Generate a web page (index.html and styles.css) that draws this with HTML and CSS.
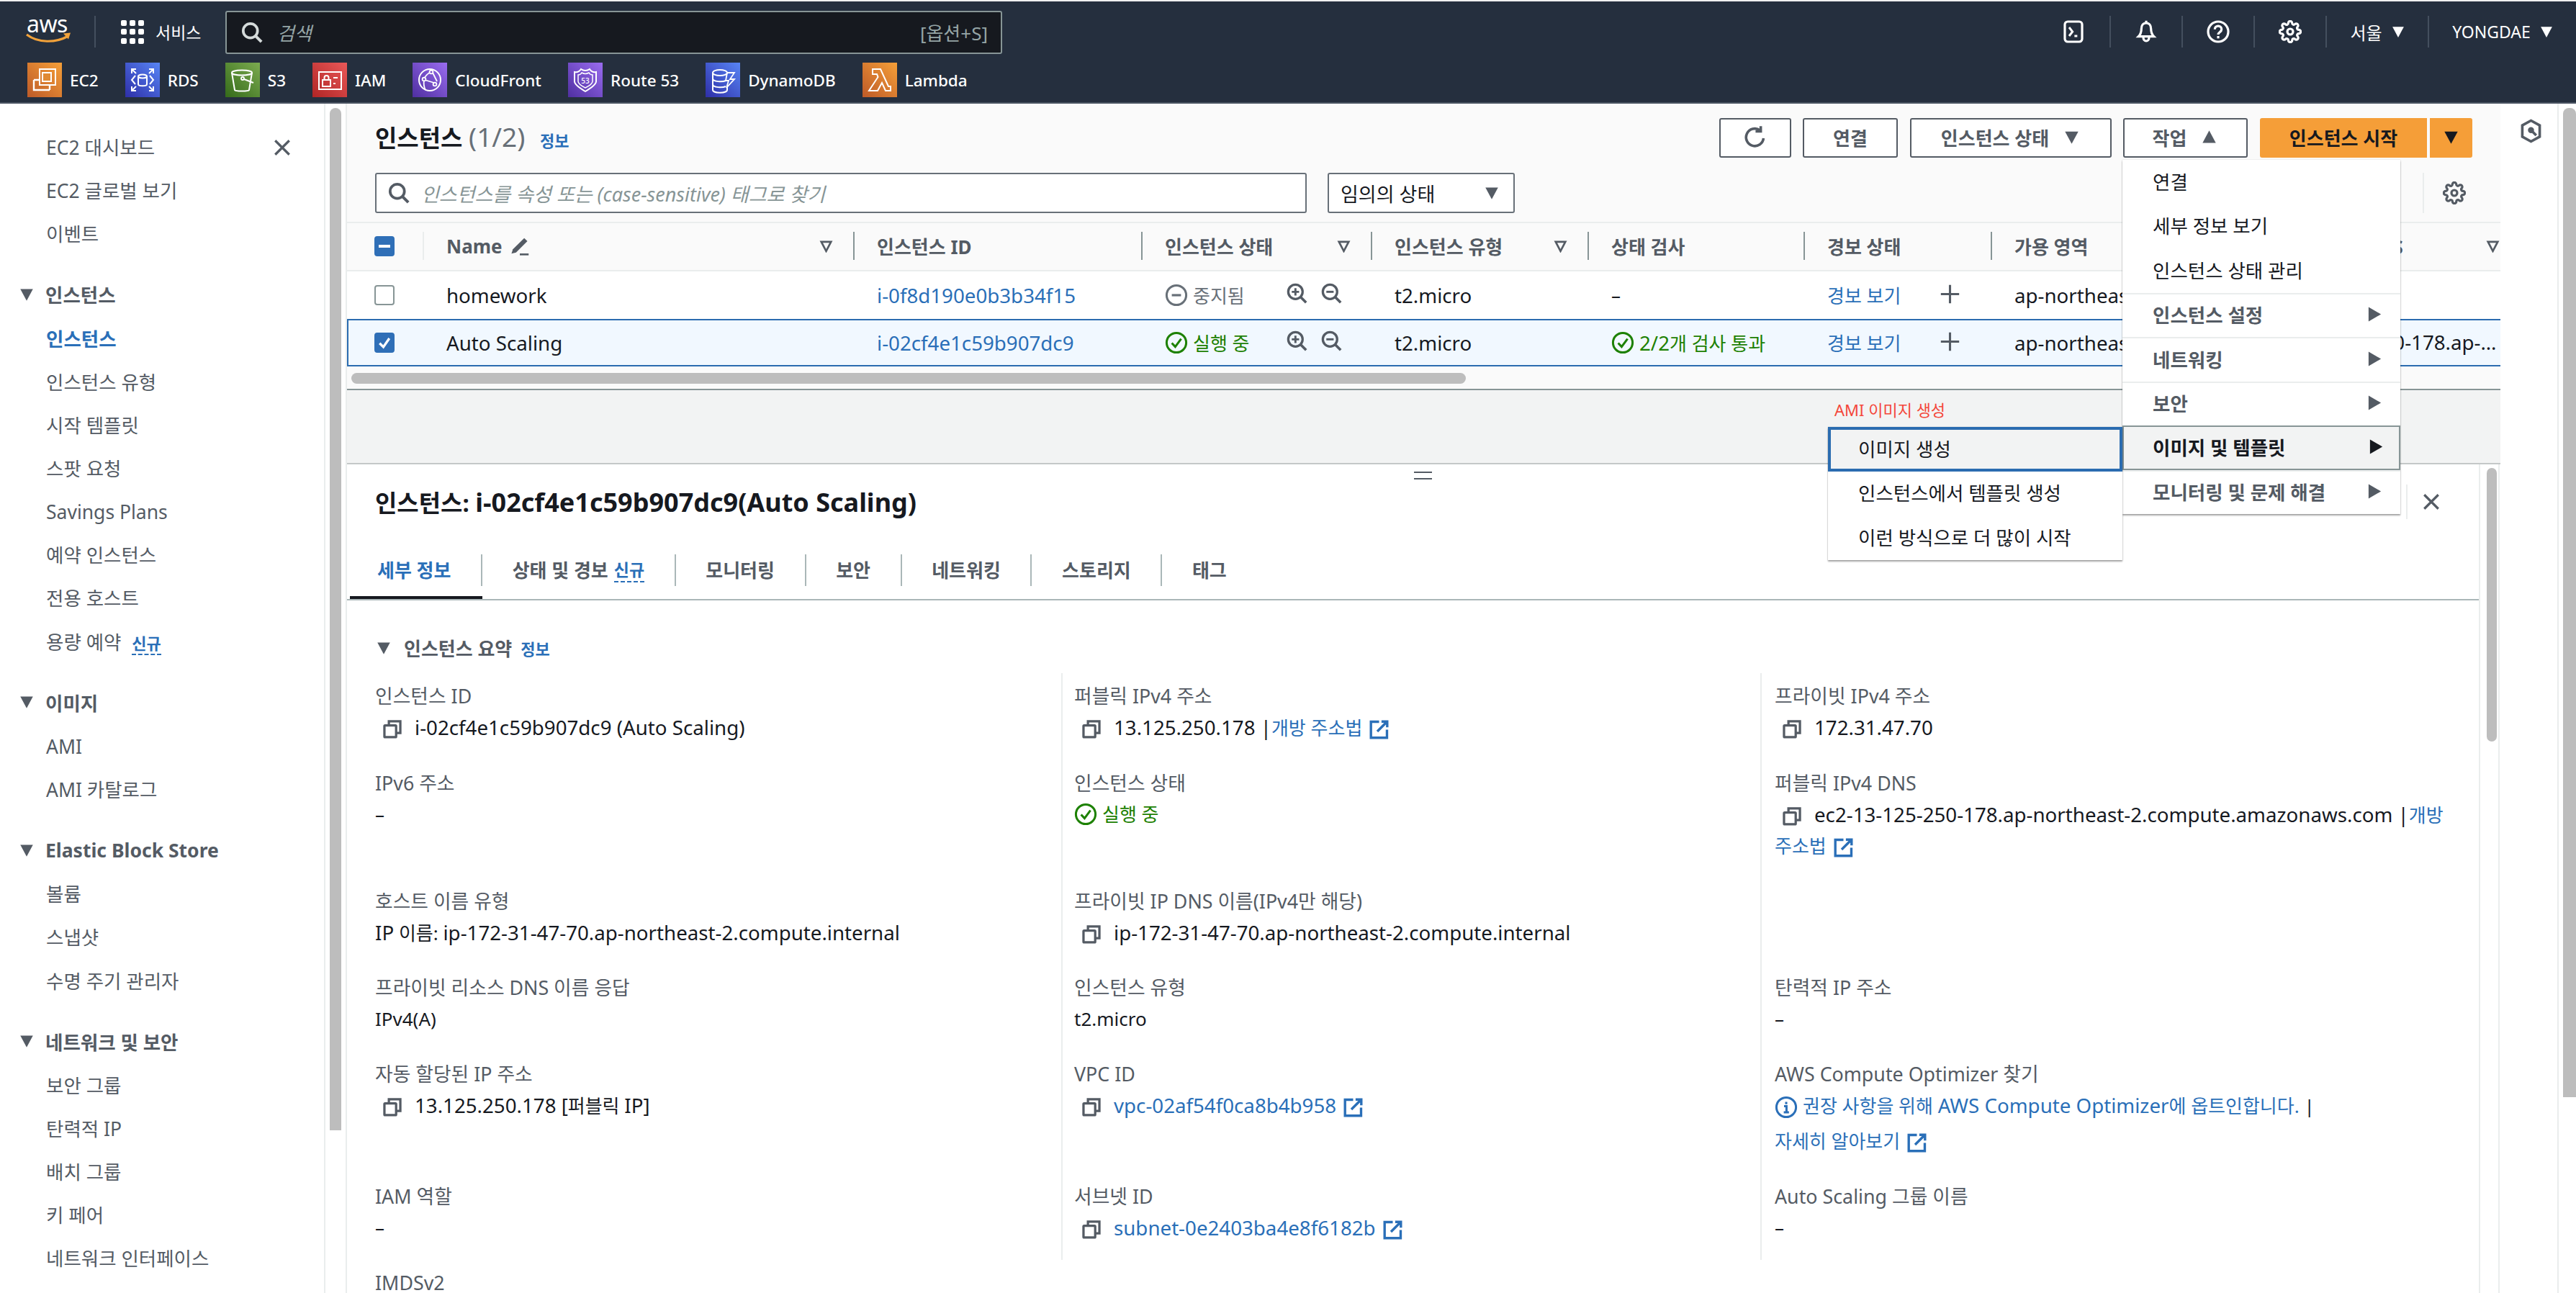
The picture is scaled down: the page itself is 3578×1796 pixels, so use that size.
FILE: index.html
```html
<!doctype html>
<html lang="ko">
<head>
    <meta charset="UTF-8">
    <title>인스턴스 | EC2</title>
    <link rel="stylesheet" href="styles.css">
</head>
<body>
<svg class="defs" xmlns="http://www.w3.org/2000/svg">
    <symbol id="i-search" viewBox="0 0 16 16"><circle cx="6.8" cy="6.8" r="5.3" fill="none" stroke="currentColor" stroke-width="2"/><path d="M10.6 10.6 15 15" stroke="currentColor" stroke-width="2.2" fill="none"/></symbol>
    <symbol id="i-gear" viewBox="0 0 24 24"><circle cx="12" cy="12" r="3" fill="none" stroke="currentColor" stroke-width="2.4"/><path fill="none" stroke="currentColor" stroke-width="2.4" d="M19.4 15a1.65 1.65 0 0 0 .33 1.82l.06.06a2 2 0 0 1 0 2.83 2 2 0 0 1-2.83 0l-.06-.06a1.65 1.65 0 0 0-1.82-.33 1.65 1.65 0 0 0-1 1.51V21a2 2 0 0 1-2 2 2 2 0 0 1-2-2v-.09A1.65 1.65 0 0 0 9 19.4a1.65 1.65 0 0 0-1.82.33l-.06.06a2 2 0 0 1-2.83 0 2 2 0 0 1 0-2.83l.06-.06a1.65 1.65 0 0 0 .33-1.82 1.65 1.65 0 0 0-1.51-1H3a2 2 0 0 1-2-2 2 2 0 0 1 2-2h.09A1.65 1.65 0 0 0 4.6 9a1.65 1.65 0 0 0-.33-1.82l-.06-.06a2 2 0 0 1 0-2.83 2 2 0 0 1 2.83 0l.06.06a1.65 1.65 0 0 0 1.82.33H9a1.65 1.65 0 0 0 1-1.51V3a2 2 0 0 1 2-2 2 2 0 0 1 2 2v.09a1.65 1.65 0 0 0 1 1.51 1.65 1.65 0 0 0 1.82-.33l.06-.06a2 2 0 0 1 2.83 0 2 2 0 0 1 0 2.83l-.06.06a1.65 1.65 0 0 0-.33 1.82V9a1.65 1.65 0 0 0 1.51 1H21a2 2 0 0 1 2 2 2 2 0 0 1-2 2h-.09a1.65 1.65 0 0 0-1.51 1z"/></symbol>
    <symbol id="i-down" viewBox="0 0 16 16"><path d="M1 2h14L8 15z" fill="currentColor"/></symbol>
    <symbol id="i-up" viewBox="0 0 16 16"><path d="M1 14h14L8 1z" fill="currentColor"/></symbol>
    <symbol id="i-right" viewBox="0 0 16 16"><path d="M2 1v14l12-7z" fill="currentColor"/></symbol>
    <symbol id="i-sort" viewBox="0 0 16 16"><path d="M2 2.5h12L8 14z" fill="none" stroke="currentColor" stroke-width="2.4"/></symbol>
    <symbol id="i-refresh" viewBox="0 0 16 16"><path d="M13.4 8.5A5.7 5.7 0 1 1 11 3.2" fill="none" stroke="currentColor" stroke-width="1.7"/><path d="M11.6 .6v3.4H8.2" fill="none" stroke="currentColor" stroke-width="1.7"/></symbol>
    <symbol id="i-pencil" viewBox="0 0 16 16"><path d="M11.5 1.5 14 4 5 13l-3.6.8L2.5 10.4z" fill="currentColor"/><path d="M8 14.5h7" stroke="currentColor" stroke-width="1.5"/></symbol>
    <symbol id="i-zoomin" viewBox="0 0 16 16"><circle cx="6.8" cy="6.8" r="5.5" fill="none" stroke="currentColor" stroke-width="1.8"/><path d="M11 11l4 4" stroke="currentColor" stroke-width="2"/><path d="M4 6.8h5.6M6.8 4v5.6" stroke="currentColor" stroke-width="1.6"/></symbol>
    <symbol id="i-zoomout" viewBox="0 0 16 16"><circle cx="6.8" cy="6.8" r="5.5" fill="none" stroke="currentColor" stroke-width="1.8"/><path d="M11 11l4 4" stroke="currentColor" stroke-width="2"/><path d="M4 6.8h5.6" stroke="currentColor" stroke-width="1.6"/></symbol>
    <symbol id="i-ok" viewBox="0 0 16 16"><circle cx="8" cy="8" r="6.8" fill="none" stroke="currentColor" stroke-width="1.5"/><path d="M4.8 8.2 7.2 10.8 11.3 5.3" fill="none" stroke="currentColor" stroke-width="1.5"/></symbol>
    <symbol id="i-stopped" viewBox="0 0 16 16"><circle cx="8" cy="8" r="6.8" fill="none" stroke="currentColor" stroke-width="1.5"/><path d="M4.8 8h6.4" stroke="currentColor" stroke-width="1.6"/></symbol>
    <symbol id="i-info" viewBox="0 0 16 16"><circle cx="8" cy="8" r="6.8" fill="none" stroke="currentColor" stroke-width="1.5"/><path d="M6.5 7.3H8.2V11.5M6.3 11.5h3.6M8 4.2v1.700" fill="none" stroke="currentColor" stroke-width="1.5"/></symbol>
    <symbol id="i-plus" viewBox="0 0 16 16"><path d="M8 1v14M1 8h14" stroke="currentColor" stroke-width="1.7"/></symbol>
    <symbol id="i-close" viewBox="0 0 16 16"><path d="M2 2l12 12M14 2 2 14" stroke="currentColor" stroke-width="2"/></symbol>
    <symbol id="i-copy" viewBox="0 0 16 16"><rect x="1.2" y="4.7" width="10" height="10" fill="#fff" stroke="currentColor" stroke-width="2" rx=".6"/><path d="M5 4.7V1.200h9.800v10h-3.500" fill="none" stroke="currentColor" stroke-width="2"/></symbol>
    <symbol id="i-ext" viewBox="0 0 16 16"><path d="M8 1.500H1.300v13.200h13.200V8" fill="none" stroke="currentColor" stroke-width="2"/><path d="M10 1.300h4.700V6M14.500 1.500 6.500 9.500" fill="none" stroke="currentColor" stroke-width="2"/></symbol>
</svg>

<header class="topnav">
    <div class="nav-main">
        <div class="logo">
            <svg class="logo-svg" width="64" height="44" viewBox="0 0 64 44">
                <text x="1" y="23" class="logo-text">aws</text>
                <path d="M1 26c16 12 40 12 58 2" fill="none" stroke="#f2a23a" stroke-width="3.2"/>
                <path d="M52 24.500l10-1-3 9" fill="#f2a23a"/>
            </svg>
        </div>
        <a class="services">
            <span class="dots"><i></i><i></i><i></i><i></i><i></i><i></i><i></i><i></i><i></i></span>
            <span>서비스</span>
        </a>
        <div class="global-search">
            <svg class="search-ic"><use href="#i-search"/></svg>
            <em>검색</em>
            <span class="shortcut">[옵션+S]</span>
        </div>
        <div class="nav-right">
            <a class="nav-btn">
                <svg class="ic-nav" viewBox="0 0 24 24"><rect x="3" y="1.500" width="18" height="21" rx="3" fill="none" stroke="currentColor" stroke-width="2.4"/><path d="M7.500 7.500 11 12l-3.500 4.500M13 16.500h3" fill="none" stroke="currentColor" stroke-width="2.2"/></svg>
            </a>
            <a class="nav-btn">
                <svg class="ic-nav" viewBox="0 0 24 24"><path d="M12 3c-3.500 0-5 3-5 6 0 3.500-1 6-3 8h16c-2-2-3-4.500-3-8 0-3-1.500-6-5-6z" fill="none" stroke="currentColor" stroke-width="2.4"/><path d="M12 .5v3M9 18c0 5 6 5 6 0" fill="none" stroke="currentColor" stroke-width="2.4"/></svg>
            </a>
            <a class="nav-btn">
                <svg class="ic-nav" viewBox="0 0 24 24"><circle cx="12" cy="12" r="10.500" fill="none" stroke="currentColor" stroke-width="2.4"/><path d="M8.500 9.500c0-4.500 7-4.500 7 0 0 3-3.500 3-3.500 5.500" fill="none" stroke="currentColor" stroke-width="2.4"/><path d="M12 16.500v2.500" stroke="currentColor" stroke-width="2.4"/></svg>
            </a>
            <a class="nav-btn">
                <svg class="ic-nav"><use href="#i-gear"/></svg>
            </a>
            <a class="nav-btn nav-region">서울<svg class="ic-caret"><use href="#i-down"/></svg></a>
            <a class="nav-btn nav-user">YONGDAE<svg class="ic-caret"><use href="#i-down"/></svg></a>
        </div>
    </div>
    <div class="nav-fav">
        <a class="fav"><span class="fav-ic orange">
            <svg viewBox="0 0 48 48"><rect x="17" y="9" width="22" height="22" fill="none" stroke="#fff" stroke-width="2"/><path d="M9 24v14h22" fill="none" stroke="#fff" stroke-width="2.4"/><path d="M9 24h8M31 31v7" fill="none" stroke="#fff" stroke-width="2.4"/><rect x="21" y="14" width="12" height="12" fill="#e08a35" stroke="#fff" stroke-width="2"/></svg>
        </span>EC2</a>
        <a class="fav"><span class="fav-ic blue">
            <svg viewBox="0 0 48 48"><ellipse cx="24" cy="19" rx="6" ry="2.500" fill="none" stroke="#fff" stroke-width="2"/><path d="M18 19v11c0 3 12 3 12 0V19" fill="none" stroke="#fff" stroke-width="2"/><path d="M14 18l-5 6 5 6M34 18l5 6-5 6" fill="none" stroke="#fff" stroke-width="2"/><path d="M9 15V9h6M9 9l6 6M39 15V9h-6M39 9l-6 6M9 33v6h6M9 39l6-6M39 33v6h-6M39 39l-6-6" fill="none" stroke="#fff" stroke-width="2"/></svg>
        </span>RDS</a>
        <a class="fav"><span class="fav-ic green">
            <svg viewBox="0 0 48 48"><ellipse cx="23" cy="14" rx="14" ry="3.500" fill="none" stroke="#fff" stroke-width="2"/><path d="M9 14l4 24c1 2 19 2 20 0l4-24" fill="none" stroke="#fff" stroke-width="2"/><circle cx="24" cy="22" r="2" fill="none" stroke="#fff" stroke-width="1.8"/><path d="M26 23l13 5" stroke="#fff" stroke-width="2"/></svg>
        </span>S3</a>
        <a class="fav"><span class="fav-ic red">
            <svg viewBox="0 0 48 48"><rect x="9" y="13" width="31" height="24" fill="none" stroke="#fff" stroke-width="2"/><rect x="14" y="24" width="11" height="9" fill="none" stroke="#fff" stroke-width="2"/><path d="M16.500 24v-3c0-4 6-4 6 0v3M29 21h6M29 29h3" fill="none" stroke="#fff" stroke-width="2"/></svg>
        </span>IAM</a>
        <a class="fav"><span class="fav-ic purple">
            <svg viewBox="0 0 48 48"><circle cx="24" cy="24" r="15" fill="none" stroke="#fff" stroke-width="2"/><path d="M16 22c3-5 7-8 10-9M28 14l6 12M17 24l13 4M16 25c-1 5 0 9 2 13" fill="none" stroke="#fff" stroke-width="1.8"/><circle cx="26" cy="13" r="2.400" fill="#7a4fc9" stroke="#fff" stroke-width="1.8"/><circle cx="16" cy="23" r="2.400" fill="#7a4fc9" stroke="#fff" stroke-width="1.8"/><circle cx="31" cy="30" r="2.400" fill="#7a4fc9" stroke="#fff" stroke-width="1.8"/></svg>
        </span>CloudFront</a>
        <a class="fav"><span class="fav-ic purple">
            <svg viewBox="0 0 48 48"><path d="M9 13c4 1 7-1 9-4 2 1.500 4 2 6 2s4-.5 6-2c2 3 5 5 9 4v13c0 5-10 11-15 14C19 37 9 31 9 26z" fill="none" stroke="#fff" stroke-width="2"/><path d="M14 17c2 0 4-1 5-3 2 1 3 1.500 5 1.500s3-.5 5-1.500c1 2 3 3 5 3v9c0 3-6 7-10 9-4-2-10-6-10-9z" fill="none" stroke="#fff" stroke-width="1.5"/><text x="24" y="29" class="fav-53">53</text></svg>
        </span>Route 53</a>
        <a class="fav"><span class="fav-ic blue">
            <svg viewBox="0 0 48 48"><ellipse cx="20" cy="14" rx="10" ry="4" fill="none" stroke="#fff" stroke-width="2"/><path d="M10 14v24c0 5 20 5 20 0v-5M10 22c0 5 14 5 18 3M10 30c0 5 14 5 18 3" fill="none" stroke="#fff" stroke-width="2"/><path d="M30 14h10l-6 9h6l-11 12 3-10h-4z" fill="none" stroke="#fff" stroke-width="1.8"/></svg>
        </span>DynamoDB</a>
        <a class="fav"><span class="fav-ic orange">
            <svg viewBox="0 0 48 48"><path d="M14 9v7h6l1.500 4L9 39h12l6-11 5 11h7v-6h-3L25 9z" fill="none" stroke="#fff" stroke-width="2"/></svg>
        </span>Lambda</a>
    </div>
</header>

<div class="page">
    <aside class="sidenav">
        <svg class="sidenav-close"><use href="#i-close"/></svg>
        <a class="side-link">EC2 대시보드</a>
        <a class="side-link">EC2 글로벌 보기</a>
        <a class="side-link">이벤트</a>
        <div class="side-title"><svg class="ic-side"><use href="#i-down"/></svg>인스턴스</div>
        <a class="side-link active">인스턴스</a>
        <a class="side-link">인스턴스 유형</a>
        <a class="side-link">시작 템플릿</a>
        <a class="side-link">스팟 요청</a>
        <a class="side-link">Savings Plans</a>
        <a class="side-link">예약 인스턴스</a>
        <a class="side-link">전용 호스트</a>
        <a class="side-link">용량 예약 <span class="new">신규</span></a>
        <div class="side-title"><svg class="ic-side"><use href="#i-down"/></svg>이미지</div>
        <a class="side-link">AMI</a>
        <a class="side-link">AMI 카탈로그</a>
        <div class="side-title"><svg class="ic-side"><use href="#i-down"/></svg>Elastic Block Store</div>
        <a class="side-link">볼륨</a>
        <a class="side-link">스냅샷</a>
        <a class="side-link">수명 주기 관리자</a>
        <div class="side-title"><svg class="ic-side"><use href="#i-down"/></svg>네트워크 및 보안</div>
        <a class="side-link">보안 그룹</a>
        <a class="side-link">탄력적 IP</a>
        <a class="side-link">배치 그룹</a>
        <a class="side-link">키 페어</a>
        <a class="side-link">네트워크 인터페이스</a>
    </aside>
    <div class="side-scroll"><div class="side-thumb"></div></div>

    <main class="content">
        <section class="list-panel">
            <div class="list-head">
                <h2 class="list-title">인스턴스 <span class="count">(1/2)</span> <a class="info">정보</a></h2>
                <div class="actions">
                    <button class="btn btn-icon"><svg class="ic-refresh"><use href="#i-refresh"/></svg></button>
                    <button class="btn btn-connect">연결</button>
                    <button class="btn btn-state">인스턴스 상태<svg class="ic-btn"><use href="#i-down"/></svg></button>
                    <button class="btn btn-actions">작업<svg class="ic-btn"><use href="#i-up"/></svg></button>
                    <button class="btn-primary btn-launch">인스턴스 시작</button>
                    <button class="btn-primary btn-launch-more"><svg class="ic-btn"><use href="#i-down"/></svg></button>
                </div>
            </div>
            <div class="filter-row">
                <div class="filter-input">
                    <svg class="ic-filter"><use href="#i-search"/></svg>
                    <em>인스턴스를 속성 또는 (case-sensitive) 태그로 찾기</em>
                </div>
                <div class="filter-select">임의의 상태<svg class="ic-select"><use href="#i-down"/></svg></div>
                <div class="filter-tools"><svg class="ic-tool"><use href="#i-gear"/></svg></div>
            </div>

            <div class="t-row t-head">
                <div class="cell cell-check"><span class="cb cb-mixed"></span></div>
                <div class="cell sep">Name <svg class="ic-pencil"><use href="#i-pencil"/></svg><svg class="ic-sort"><use href="#i-sort"/></svg></div>
                <div class="cell sep">인스턴스 ID</div>
                <div class="cell sep">인스턴스 상태<svg class="ic-sort"><use href="#i-sort"/></svg></div>
                <div class="cell sep">인스턴스 유형<svg class="ic-sort"><use href="#i-sort"/></svg></div>
                <div class="cell sep">상태 검사</div>
                <div class="cell sep">경보 상태</div>
                <div class="cell sep">가용 영역</div>
                <div class="cell sep cell-last">퍼블릭 IPv4 DNS<svg class="ic-sort"><use href="#i-sort"/></svg></div>
            </div>
            <div class="t-row">
                <div class="cell cell-check"><span class="cb"></span></div>
                <div class="cell en">homework</div>
                <div class="cell en"><a class="link">i-0f8d190e0b3b34f15</a></div>
                <div class="cell">
                    <span class="status stopped"><svg class="ic-status"><use href="#i-stopped"/></svg>중지됨</span>
                    <span class="zooms"><svg class="ic-zoom"><use href="#i-zoomin"/></svg><svg class="ic-zoom"><use href="#i-zoomout"/></svg></span>
                </div>
                <div class="cell en">t2.micro</div>
                <div class="cell">–</div>
                <div class="cell"><a class="link">경보 보기</a><svg class="ic-plus"><use href="#i-plus"/></svg></div>
                <div class="cell en">ap-northeast-2a</div>
                <div class="cell">–</div>
            </div>
            <div class="t-row selected">
                <div class="cell cell-check"><span class="cb cb-on"><svg viewBox="0 0 16 16"><path d="M3.500 8.500 7 12l5.500-8" fill="none" stroke="#fff" stroke-width="2.2"/></svg></span></div>
                <div class="cell en">Auto Scaling</div>
                <div class="cell en"><a class="link">i-02cf4e1c59b907dc9</a></div>
                <div class="cell">
                    <span class="status running"><svg class="ic-status"><use href="#i-ok"/></svg>실행 중</span>
                    <span class="zooms"><svg class="ic-zoom"><use href="#i-zoomin"/></svg><svg class="ic-zoom"><use href="#i-zoomout"/></svg></span>
                </div>
                <div class="cell en">t2.micro</div>
                <div class="cell"><span class="status running"><svg class="ic-status"><use href="#i-ok"/></svg><span class="en">2/2</span>개&nbsp;검사&nbsp;통과</span></div>
                <div class="cell"><a class="link">경보 보기</a><svg class="ic-plus"><use href="#i-plus"/></svg></div>
                <div class="cell en">ap-northeast-2a</div>
                <div class="cell en cell-clip">ec2-13-125-250-178.ap-northeast-2.compute.amazonaws.com</div>
            </div>
            <div class="h-scroll"><div class="h-thumb"></div></div>
        </section>

        <div class="split-gap"></div>

        <section class="detail-panel">
            <div class="drag-handle"></div>
            <div class="detail-body">
                <div class="detail-head">
                    <h2>인스턴스: <span class="title-id">i-02cf4e1c59b907dc9(Auto Scaling)</span></h2>
                    <span class="detail-close"><svg><use href="#i-close"/></svg></span>
                </div>
                <nav class="tabs">
                    <a class="tab active"><span>세부 정보</span></a>
                    <a class="tab"><span>상태 및 경보 <b class="new">신규</b></span></a>
                    <a class="tab"><span>모니터링</span></a>
                    <a class="tab"><span>보안</span></a>
                    <a class="tab"><span>네트워킹</span></a>
                    <a class="tab"><span>스토리지</span></a>
                    <a class="tab"><span class="last">태그</span></a>
                </nav>
                <h3 class="summary-title"><svg class="ic-summary"><use href="#i-down"/></svg>인스턴스 요약 <a class="info">정보</a></h3>
                <div class="fields">
                    <div class="field"><label>인스턴스 ID</label><div class="val"><svg class="ic-copy"><use href="#i-copy"/></svg><span class="en">i-02cf4e1c59b907dc9 (Auto Scaling)</span></div></div>
                    <div class="field"><label>퍼블릭 IPv4 주소</label><div class="val"><svg class="ic-copy"><use href="#i-copy"/></svg><span class="en">13.125.250.178 |</span><a class="link">개방 주소법<svg class="ic-ext"><use href="#i-ext"/></svg></a></div></div>
                    <div class="field"><label>프라이빗 IPv4 주소</label><div class="val"><svg class="ic-copy"><use href="#i-copy"/></svg><span class="en">172.31.47.70</span></div></div>

                    <div class="field"><label>IPv6 주소</label><div class="val">–</div></div>
                    <div class="field"><label>인스턴스 상태</label><div class="val"><span class="status running"><svg class="ic-status"><use href="#i-ok"/></svg>실행 중</span></div></div>
                    <div class="field"><label>퍼블릭 IPv4 DNS</label><div class="val"><svg class="ic-copy"><use href="#i-copy"/></svg><span class="en">ec2-13-125-250-178.ap-northeast-2.compute.amazonaws.com |</span><a class="link">개방 주소법<svg class="ic-ext"><use href="#i-ext"/></svg></a></div></div>

                    <div class="field"><label>호스트 이름 유형</label><div class="val"><span class="en">IP</span> 이름: <span class="en">ip-172-31-47-70.ap-northeast-2.compute.internal</span></div></div>
                    <div class="field"><label>프라이빗 IP DNS 이름(IPv4만 해당)</label><div class="val"><svg class="ic-copy"><use href="#i-copy"/></svg><span class="en">ip-172-31-47-70.ap-northeast-2.compute.internal</span></div></div>
                    <div class="field"></div>

                    <div class="field"><label>프라이빗 리소스 DNS 이름 응답</label><div class="val en">IPv4(A)</div></div>
                    <div class="field"><label>인스턴스 유형</label><div class="val en">t2.micro</div></div>
                    <div class="field"><label>탄력적 IP 주소</label><div class="val">–</div></div>

                    <div class="field"><label>자동 할당된 IP 주소</label><div class="val"><svg class="ic-copy"><use href="#i-copy"/></svg><span class="en">13.125.250.178 [</span>퍼블릭 <span class="en">IP]</span></div></div>
                    <div class="field"><label>VPC ID</label><div class="val"><svg class="ic-copy"><use href="#i-copy"/></svg><a class="link"><span class="en">vpc-02af54f0ca8b4b958</span><svg class="ic-ext"><use href="#i-ext"/></svg></a></div></div>
                    <div class="field"><label>AWS Compute Optimizer 찾기</label>
                        <div class="val"><a class="link"><svg class="ic-status"><use href="#i-info"/></svg>권장 사항을 위해 <span class="en">AWS Compute Optimizer</span>에 옵트인합니다.</a> |</div>
                        <div class="val val-more"><a class="link">자세히 알아보기<svg class="ic-ext"><use href="#i-ext"/></svg></a></div>
                    </div>

                    <div class="field"><label>IAM 역할</label><div class="val">–</div></div>
                    <div class="field"><label>서브넷 ID</label><div class="val"><svg class="ic-copy"><use href="#i-copy"/></svg><a class="link"><span class="en">subnet-0e2403ba4e8f6182b</span><svg class="ic-ext"><use href="#i-ext"/></svg></a></div></div>
                    <div class="field"><label>Auto Scaling 그룹 이름</label><div class="val">–</div></div>

                    <div class="field"><label>IMDSv2</label></div>
                </div>
            </div>
            <div class="detail-scroll"><div class="detail-thumb"></div></div>
        </section>

        <!-- 작업 드롭다운 -->
        <ul class="menu">
            <li>연결</li>
            <li>세부 정보 보기</li>
            <li>인스턴스 상태 관리</li>
            <li class="group">인스턴스 설정<svg class="ic-arrow"><use href="#i-right"/></svg></li>
            <li class="group">네트워킹<svg class="ic-arrow"><use href="#i-right"/></svg></li>
            <li class="group">보안<svg class="ic-arrow"><use href="#i-right"/></svg></li>
            <li class="group hover">이미지 및 템플릿<svg class="ic-arrow"><use href="#i-right"/></svg></li>
            <li class="group">모니터링 및 문제 해결<svg class="ic-arrow"><use href="#i-right"/></svg></li>
        </ul>
        <span class="menu-tip">AMI 이미지 생성</span>
        <ul class="menu submenu">
            <li class="focus">이미지 생성</li>
            <li>인스턴스에서 템플릿 생성</li>
            <li>이런 방식으로 더 많이 시작</li>
        </ul>
    </main>

    <aside class="rail">
        <div class="rail-body">
            <svg viewBox="0 0 24 28" class="ic-rail"><path d="M12 2 22 7.500v13L12 26 2 20.500v-13z" fill="none" stroke="currentColor" stroke-width="3"/><circle cx="12" cy="13" r="3.500" fill="currentColor"/><path d="M13 14l5 5" stroke="currentColor" stroke-width="3"/></svg>
        </div>
        <div class="rail-scroll"><div class="rail-thumb"></div></div>
    </aside>
</div>
</body>
</html>
```
FILE: styles.css
```css
* {
    box-sizing: border-box;
}
html, body {
    margin: 0;
    padding: 0;
}
body {
    width: 3578px;
    height: 1796px;
    overflow: hidden;
    padding-top: 2px;
    background: #f0f0f0;
    font-family: "Noto Sans", "Noto Sans CJK KR", sans-serif;
    font-size: 26px;
    color: #16191f;
}
.defs {
    position: absolute;
    width: 0;
    height: 0;
}
h2, h3, ul {
    margin: 0;
    padding: 0;
}
em {
    font-style: italic;
}
/* latin runs sit a bit bigger than the hangul next to them */
.en {
    font-size: 27.7px;
}

/* top nav */
.topnav {
    height: 142px;
    background: #252f3e;
    border-bottom: 2px solid #4b5563;
    color: #fff;
}
.nav-main {
    display: flex;
    align-items: center;
    height: 84px;
}
.logo {
    width: 133px;
    height: 44px;
    padding-left: 36px;
    border-right: 2px solid #444f5e;
}
.logo-svg {
    overflow: visible;
}
.logo-text {
    font-family: "Noto Sans", sans-serif;
    font-size: 32px;
    fill: #fff;
    letter-spacing: -.5px;
}
.services {
    display: flex;
    align-items: center;
    gap: 16px;
    width: 180px;
    padding-left: 35px;
    font-size: 23px;
}
.dots {
    display: grid;
    grid-template-columns: repeat(3, 8px);
    grid-gap: 4.5px 4px;
}
.dots i {
    width: 8px;
    height: 8px;
    border-radius: 2px;
    background: #fff;
}
.global-search {
    display: flex;
    align-items: center;
    width: 1079px;
    height: 60px;
    margin-top: 2px;
    background: #16191f;
    border: 2px solid #879596;
    border-radius: 3px;
    padding: 0 18px 0 20px;
    color: #95a5a6;
    font-size: 26px;
}
.search-ic {
    width: 30px;
    height: 30px;
    color: #d5dbdb;
    margin-right: 20px;
}
.shortcut {
    margin-left: auto;
    font-size: 26px;
}
.nav-right {
    display: flex;
    margin-left: auto;
    align-items: center;
}
.nav-btn {
    display: flex;
    align-items: center;
    justify-content: center;
    width: 100px;
    height: 44px;
    border-left: 2px solid #444f5e;
    font-size: 24px;
}
.nav-btn:first-child {
    border-left: 0;
}
.ic-nav {
    width: 32px;
    height: 32px;
    color: #fff;
}
.ic-caret {
    width: 18px;
    height: 18px;
    margin-left: 13px;
    color: #fff;
}
.nav-region {
    width: 142px;
}
.nav-user {
    width: 206px;
    font-size: 23px;
}
.nav-fav {
    display: flex;
    align-items: center;
    height: 56px;
    padding: 0 0 6px 38px;
    font-size: 22.5px;
    font-weight: 500;
}
.fav {
    display: flex;
    align-items: center;
    gap: 11px;
    margin-right: 37px;
}
.fav-ic {
    width: 48px;
    height: 48px;
    display: block;
}
.fav-ic svg {
    display: block;
    width: 48px;
    height: 48px;
}
.fav-53 {
    font-size: 10px;
    fill: #fff;
    text-anchor: middle;
}
.orange { background: linear-gradient(45deg, #bd5a28, #f59f38); }
.blue { background: linear-gradient(45deg, #2e2fa8, #5885f5); }
.green { background: linear-gradient(45deg, #356b1a, #7cab50); }
.red { background: linear-gradient(45deg, #b02525, #ea5858); }
.purple { background: linear-gradient(45deg, #4f2fa0, #9a6cf0); }

/* page columns */
.page {
    display: flex;
    height: 1652px;
    background: #fff;
}
.sidenav {
    position: relative;
    width: 452px;
    padding-top: 31px;
    border-right: 2px solid #eaeded;
    background: #fff;
    color: #545b64;
    font-size: 26.5px;
    overflow: hidden;
}
.sidenav-close {
    position: absolute;
    left: 379px;
    top: 48px;
    width: 26px;
    height: 26px;
}
.side-link {
    display: block;
    height: 60.15px;
    line-height: 60px;
    padding-left: 64px;
    white-space: nowrap;
}
.side-link.active {
    color: #2a6fb8;
    font-weight: 700;
}
.side-title {
    display: flex;
    align-items: center;
    height: 60.15px;
    margin-top: 25px;
    padding: 0 0 3px 26px;
    font-weight: 700;
}
.ic-side {
    width: 22px;
    height: 20px;
    margin-right: 15px;
}
.new {
    margin-left: 8px;
    color: #2a6fb8;
    font-size: 22px;
    font-weight: 700;
    border-bottom: 2px dashed #2a6fb8;
}
.side-scroll {
    width: 28px;
    padding: 6px 6px 0;
    background: #fff;
}
.side-thumb {
    width: 16px;
    height: 1420px;
    border-radius: 8px 8px 0 0;
    background: #bdbdbd;
}

.content {
    position: relative;
    width: 2993px;
    background: #f2f3f3;
    display: flex;
    flex-direction: column;
    border-left: 2px solid #eaeded;
}
.list-panel {
    height: 398px;
    background: #fafafa;
    border-bottom: 2px solid #879596;
}
.list-head {
    display: flex;
    align-items: center;
    justify-content: space-between;
    padding: 20px 39px 0 39px;
}
.list-title {
    margin-bottom: 4px;
    font-size: 33px;
    font-weight: 700;
    color: #16191f;
}
.count {
    font-size: 37px;
    font-weight: 400;
    color: #687078;
}
.info {
    margin-left: 6px;
    font-size: 22px;
    font-weight: 700;
    color: #2a6fb8;
}
.list-title .info {
    margin-left: 12px;
}
.actions {
    display: flex;
}
.btn, .btn-primary {
    display: flex;
    align-items: center;
    justify-content: center;
    height: 55px;
    padding: 0 0 2px;
    font-family: inherit;
    font-size: 26px;
    font-weight: 700;
    color: #545b64;
    background: #fff;
    border: 2px solid #545b64;
    border-radius: 3px;
}
.btn-icon {
    width: 100px;
    margin-right: 16px;
}
.btn-connect {
    width: 132px;
    margin-right: 17px;
}
.btn-state {
    width: 280px;
    margin-right: 16px;
}
.btn-actions {
    width: 173px;
    margin-right: 17px;
}
.btn-primary {
    background: #f59e38;
    border: 0;
    color: #16191f;
}
.btn-launch {
    width: 232px;
    border-radius: 3px 0 0 3px;
    margin-right: 4px;
}
.btn-launch-more {
    width: 59px;
    border-radius: 0 3px 3px 0;
}
.ic-refresh {
    width: 34px;
    height: 34px;
}
.ic-btn {
    width: 25px;
    height: 21px;
    margin-left: 19px;
}
.btn-launch-more .ic-btn {
    margin-left: 0;
}
.filter-row {
    display: flex;
    align-items: center;
    padding: 21px 0 0 39px;
    height: 77px;
}
.filter-input {
    display: flex;
    align-items: center;
    width: 1294px;
    height: 56px;
    padding-left: 16px;
    background: #fff;
    border: 2px solid #687078;
    border-radius: 3px;
    color: #879596;
    font-size: 27px;
}
.ic-filter {
    width: 30px;
    height: 30px;
    margin-right: 16px;
    color: #545b64;
}
.filter-select {
    display: flex;
    align-items: center;
    justify-content: space-between;
    width: 260px;
    height: 56px;
    margin-left: 29px;
    padding: 0 18px 0 16px;
    background: #fff;
    border: 2px solid #687078;
    border-radius: 3px;
    font-size: 27px;
}
.ic-select {
    width: 24px;
    height: 20px;
    color: #545b64;
}
.filter-tools {
    height: 56px;
    margin-left: 1261px;
    padding-left: 26px;
    border-left: 2px solid #eaeded;
    display: flex;
    align-items: center;
}
.ic-tool {
    width: 32px;
    height: 32px;
    color: #545b64;
}

/* instance table */
.t-row {
    display: grid;
    grid-template-columns: 105px 598px 400px 319px 301px 300px 260px 344px 363px;
    height: 66px;
    background: #fff;
    font-size: 26px;
}
.t-head {
    height: 69px;
    margin-top: 12px;
    padding-bottom: 2px;
    background: #fafafa;
    border-top: 2px solid #eaeded;
    border-bottom: 2px solid #eaeded;
    font-weight: 700;
    color: #545b64;
}
.selected {
    background: #f1f8ff;
    box-shadow: inset 0 2px #2b6cb0, inset 0 -2px #2b6cb0, inset 2px 0 #2b6cb0;
}
.cell {
    display: flex;
    align-items: center;
    position: relative;
    padding-left: 33px;
    white-space: nowrap;
    overflow: hidden;
}
.cell-check {
    padding-left: 38px;
}
.cell-clip {
    display: block;
    line-height: 64px;
    text-overflow: ellipsis;
}
.sep::before {
    content: "";
    position: absolute;
    left: 0;
    top: 12px;
    bottom: 12px;
    width: 2px;
    background: #879596;
}
.t-head .cell:nth-child(2)::before {
    background: #eaeded;
}
.cb {
    display: flex;
    width: 28px;
    height: 28px;
    border: 2px solid #879596;
    border-radius: 4px;
    background: #fff;
}
.cb-mixed, .cb-on {
    background: #2f6fb7;
    border-color: #2f6fb7;
}
.cb-mixed::after {
    content: "";
    width: 16px;
    height: 4px;
    margin: auto;
    background: #fff;
}
.cb-on svg {
    width: 24px;
    height: 24px;
}
.ic-pencil {
    width: 28px;
    height: 28px;
    margin-left: 10px;
}
.ic-sort {
    position: absolute;
    right: 28px;
    width: 19px;
    height: 18px;
    color: #545b64;
}
.cell-last .ic-sort {
    right: 0;
}
.link {
    color: #2a6fb8;
}
.status {
    display: inline-flex;
    align-items: center;
    white-space: nowrap;
}
.ic-status {
    width: 32px;
    height: 32px;
    margin-right: 7px;
    flex: none;
    vertical-align: -8px;
}
.stopped {
    color: #687078;
}
.running {
    color: #1d8102;
}
.zooms {
    position: absolute;
    left: 202px;
    top: 16px;
    display: flex;
    gap: 19px;
}
.ic-zoom {
    width: 29px;
    height: 29px;
    color: #545b64;
}
.ic-plus {
    position: absolute;
    left: 189px;
    top: 17px;
    width: 29px;
    height: 29px;
    color: #545b64;
}
.h-scroll {
    height: 29px;
    padding: 9px 6px 0;
}
.h-thumb {
    width: 1548px;
    height: 15px;
    border-radius: 8px;
    background: #bdbdbd;
}

.split-gap {
    height: 101px;
    background: #f2f3f3;
}

/* detail panel */
.detail-panel {
    position: relative;
    display: flex;
    flex: 1;
    background: #fff;
    border-top: 2px solid #c4c8c8;
    overflow: hidden;
}
.drag-handle {
    position: absolute;
    left: 1482px;
    top: 10px;
    width: 25px;
    height: 11px;
    border-top: 2px solid #545b64;
    border-bottom: 2px solid #545b64;
}
.detail-body {
    width: 2961px;
}
.detail-head {
    display: flex;
    align-items: center;
    height: 104px;
    padding-left: 39px;
}
.detail-head h2 {
    font-size: 33px;
    font-weight: 700;
}
.title-id {
    font-size: 36px;
}
.detail-close {
    display: flex;
    align-items: center;
    margin-left: auto;
    width: 101px;
    height: 48px;
    padding-left: 20px;
    border-left: 2px solid #eaeded;
}
.detail-close svg {
    width: 26px;
    height: 26px;
    color: #545b64;
}
.tabs {
    display: flex;
    height: 85px;
    padding-left: 4px;
    border-bottom: 2px solid #aab7b8;
    color: #545b64;
    font-weight: 700;
    font-size: 26px;
}
.tab {
    height: 83px;
    padding-top: 21px;
    border-bottom: 4px solid transparent;
}
.tab span {
    display: flex;
    align-items: center;
    height: 44px;
    padding: 0 41.6px 3px;
    border-right: 2px solid #aab7b8;
}
.tab:first-child span {
    padding-left: 38px;
}
.tab span.last {
    border-right: 0;
}
.tab.active {
    border-bottom-color: #16191f;
    color: #2a6fb8;
}
.tab .new {
    margin-left: 8px;
    font-size: 23px;
}
.summary-title {
    display: flex;
    align-items: center;
    height: 44px;
    margin: 44px 0 13px;
    padding-left: 39px;
    font-size: 26px;
    color: #545b64;
}
.ic-summary {
    width: 24px;
    height: 20px;
    margin-right: 16px;
}
.summary-title .info {
    margin-left: 12px;
}
.fields {
    display: grid;
    grid-template-columns: 992px 971px 998px;
}
.field {
    padding: 10px 0 22px 16px;
    border-left: 2px solid #eaeded;
}
.field:nth-child(3n+1) {
    padding-left: 39px;
    border-left: 0;
}
.field:nth-child(3n) {
    padding-left: 18px;
    padding-right: 40px;
}
.field label {
    display: block;
    height: 44px;
    line-height: 44px;
    color: #545b64;
    font-size: 26.8px;
}
.val {
    line-height: 43.5px;
    font-size: 26px;
    word-break: keep-all;
}
.val-more {
    margin-top: 6px;
}
.ic-copy {
    width: 26px;
    height: 26px;
    margin: 0 18px 0 11px;
    vertical-align: -5px;
    color: #545b64;
}
.ic-ext {
    width: 27px;
    height: 27px;
    margin-left: 10px;
    vertical-align: -6px;
}
.detail-scroll {
    width: 29px;
    padding: 5px 6px 0 9px;
    border-left: 2px solid #eaeded;
    border-right: 2px solid #eaeded;
}
.detail-thumb {
    width: 14px;
    height: 380px;
    border-radius: 7px;
    background: #bdbdbd;
}

/* dropdown */
.menu {
    position: absolute;
    left: 2466px;
    top: 78px;
    width: 386px;
    list-style: none;
    background: #fff;
    box-shadow: 0 2px 2px rgba(0, 0, 0, .35), 0 0 1px rgba(0, 0, 0, .25);
    font-size: 26.5px;
}
.menu li {
    position: relative;
    display: flex;
    align-items: center;
    height: 61.5px;
    padding: 0 0 3px 42px;
    white-space: nowrap;
}
.menu .group {
    color: #545b64;
    font-weight: 700;
    border-top: 2px solid #eaeded;
}
.menu .hover {
    padding-left: 40px;
    background: #f2f3f3;
    color: #16191f;
    border: 2px solid #879596;
}
.ic-arrow {
    position: absolute;
    left: 339px;
    width: 23px;
    height: 23px;
}
.submenu {
    left: 2057px;
    top: 449px;
    width: 409px;
}
.submenu .focus {
    background: #f2f3f3;
    border: 4px solid #2b6cb0;
    padding-left: 38px;
}
.menu-tip {
    position: absolute;
    left: 2066px;
    top: 408px;
    color: #f4473a;
    font-size: 22px;
}

/* right rail */
.rail {
    display: flex;
    flex: 1;
    background: #fff;
}
.rail-body {
    width: 81px;
    padding: 20px 0 0 28px;
    border-right: 2px solid #eaeded;
}
.ic-rail {
    width: 29px;
    height: 36px;
    color: #545b64;
}
.rail-scroll {
    flex: 1;
    padding: 6px 0 0 6px;
}
.rail-thumb {
    height: 1374px;
    border-radius: 8px 8px 0 0;
    background: #bdbdbd;
}
```
